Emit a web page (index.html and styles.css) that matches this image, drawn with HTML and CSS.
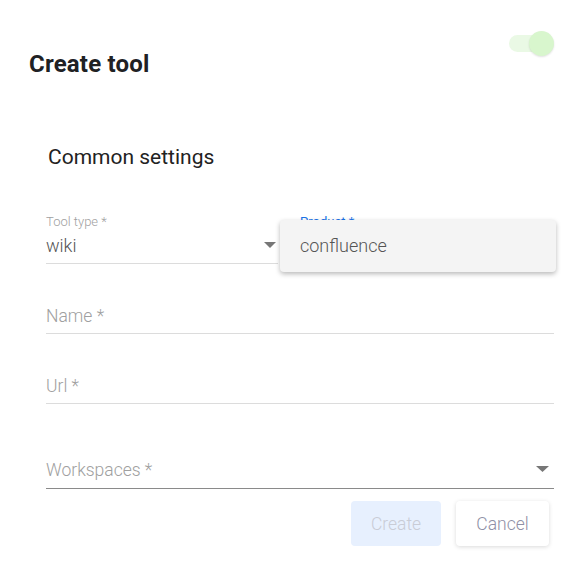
FILE: index.html
```html
<!DOCTYPE html>
<html>
<head>
<meta charset="utf-8">
<link rel="stylesheet" href="styles.css">
</head>
<body>
<div class="dialog">
  <div class="header">
    <h1 class="title">Create tool</h1>
    <div class="switch"><span class="track"></span><span class="thumb"></span></div>
  </div>
  <h2 class="section-title">Common settings</h2>
  <div class="form">
    <div class="row">
      <div class="field">
        <div class="label">Tool type *</div>
        <div class="control">
          <span class="value">wiki</span>
          <svg class="caret" width="12" height="6" viewBox="0 0 12 6"><path d="M0 0h12L6 6z" fill="#777"/></svg>
        </div>
      </div>
      <div class="field">
        <div class="label focused">Product *</div>
        <div class="control"><span class="value"></span></div>
        <div class="menu"><div class="menu-item">confluence</div></div>
      </div>
    </div>
    <div class="field plain"><div class="control"><span class="placeholder">Name *</span></div></div>
    <div class="field plain"><div class="control"><span class="placeholder">Url *</span></div></div>
    <div class="field plain ws"><div class="control dark">
      <span class="placeholder">Workspaces *</span>
      <svg class="caret" width="13" height="6" viewBox="0 0 13 6"><path d="M0 0h13L6.5 6z" fill="#777"/></svg>
    </div></div>
  </div>
  <div class="actions">
    <button class="btn btn-create">Create</button>
    <button class="btn btn-cancel">Cancel</button>
  </div>
</div>
</body>
</html>
```

FILE: styles.css
```css
* { box-sizing: border-box; }
html, body { margin: 0; padding: 0; background: #fff; }
body { font-family: Roboto, "Liberation Sans", sans-serif; width: 580px; height: 565px; overflow: hidden; }

.dialog { padding: 0 26px 0 0; }

.header { display: flex; justify-content: space-between; align-items: flex-start; padding-left: 29px; }
.title { margin: 50px 0 0; font-size: 24px; line-height: 28px; font-weight: 700; color: #202124; letter-spacing: 0.2px; }

.switch { position: relative; width: 45px; height: 25px; margin-top: 31px; }
.track { position: absolute; left: 0; top: 4px; width: 36px; height: 17px; border-radius: 9px; background: #eaf9e5; }
.thumb { position: absolute; right: 0; top: 0; width: 25px; height: 25px; border-radius: 50%; background: #d8f6cd; box-shadow: 0 1px 2px rgba(0,0,0,0.12); }

.section-title { margin: 67px 0 0 48px; font-size: 21px; line-height: 24px; font-weight: 400; color: #222; }

.form { padding-left: 46px; margin-top: 46px; }
.row { display: grid; grid-template-columns: 232px 1fr; column-gap: 22px; }
.field { position: relative; }
.label { font-size: 13px; line-height: 14px; color: #a0a0a0; font-weight: 300; margin-bottom: 7px; }
.label.focused { color: #1a73e8; font-weight: 400; }
.control { display: flex; align-items: center; justify-content: space-between; height: 28px; padding-bottom: 7px; border-bottom: 1px solid #dcdcdc; }
.control.dark { border-bottom-color: #8a8a8a; height: 29px; padding-bottom: 8px; }
.value { font-size: 18px; line-height: 20px; font-weight: 300; color: #555; }
.placeholder { font-size: 17.5px; line-height: 20px; font-weight: 300; color: #a0a0a0; }
.caret { margin-right: 2px; margin-top: -2px; }
.ws .caret { margin-right: 5px; }

.plain { margin-top: 42px; }
.ws { margin-top: 56px; }

.menu { position: absolute; left: -20px; top: 5px; width: 276px; height: 52px; background: #f4f4f4; border-radius: 4px; box-shadow: 0 2px 5px rgba(0,0,0,0.28); padding: 0 20px; display: flex; align-items: center; }
.menu-item { font-size: 18px; font-weight: 300; color: #555; margin-top: -2px; }

.actions { display: flex; justify-content: flex-end; gap: 15px; margin-top: 12px; padding-right: 5px; }
.btn { height: 45px; border: none; border-radius: 4px; font-family: Roboto, "Liberation Sans", sans-serif; font-size: 17.5px; font-weight: 300; padding: 0; }
.btn-create { width: 90px; background: #e7f0fe; color: #c9ccd6; }
.btn-cancel { width: 93px; background: #fff; color: #8f90a6; box-shadow: 0 1px 4px rgba(0,0,0,0.15); }
```
